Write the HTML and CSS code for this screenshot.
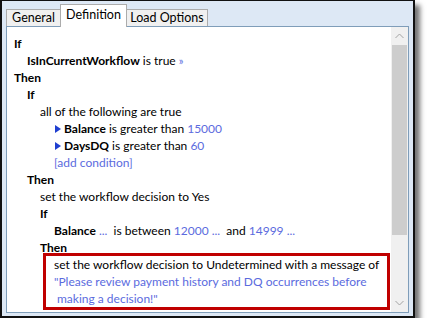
FILE: index.html
```html
<!DOCTYPE html>
<html lang="en">
<head>
  <meta charset="UTF-8" />
  <title>Rule Definition</title>
  <link rel="stylesheet" href="styles.css">
</head>
<body>
  <div class="window">
    <div class="tabs">
      <div class="tab tab-general">General</div>
      <div class="tab tab-active">Definition</div>
      <div class="tab tab-load">Load Options</div>
    </div>

    <div class="panel">
      <div class="rules">
        <div class="line kw">If</div>
        <div class="line lv1"><b>IsInCurrentWorkflow</b> is true <span class="link more">&raquo;</span></div>
        <div class="line kw">Then</div>
        <div class="line lv1 kw">If</div>
        <div class="line lv2">all of the following are true</div>
        <div class="line cond"><span class="arrow"></span><b>Balance</b> is greater than <span class="link">15000</span></div>
        <div class="line cond"><span class="arrow"></span><b>DaysDQ</b> is greater than <span class="link">60</span></div>
        <div class="line lv3 link">[add condition]</div>
        <div class="line lv1 kw">Then</div>
        <div class="line lv2">set the workflow decision to Yes</div>
        <div class="line lv2 kw">If</div>
        <div class="line lv3"><b>Balance</b> <span class="link">...</span>&nbsp; is between <span class="link">12000 ...</span>&nbsp; and <span class="link">14999 ...</span></div>
        <div class="line lv2 kw">Then</div>
        <div class="highlight">
          <div class="line">set the workflow decision to Undetermined with a message of</div>
          <div class="line link">"Please review payment history and DQ occurrences before</div>
          <div class="line link wrap">making a decision!"</div>
        </div>
      </div>

      <div class="scrollbar">
        <div class="sb-btn">
          <svg width="9" height="6" viewBox="0 0 9 6"><path d="M0.5 5 L4.5 1 L8.5 5" fill="none" stroke="#a3a3a3" stroke-width="1"/></svg>
        </div>
        <div class="sb-thumb"></div>
        <div class="sb-track"></div>
        <div class="sb-btn">
          <svg width="9" height="6" viewBox="0 0 9 6"><path d="M0.5 1 L4.5 5 L8.5 1" fill="none" stroke="#a3a3a3" stroke-width="1"/></svg>
        </div>
      </div>
    </div>
  </div>
</body>
</html>
```

FILE: styles.css
```css
* {
  box-sizing: border-box;
  margin: 0;
  padding: 0;
}

body {
  background: #ffffff;
  font-family: Lato, "Noto Sans", sans-serif;
  font-size: 12px;
  color: #000;
}

.window {
  width: 415px;
  height: 318px;
  background: #dde8f5;
  border: 2px solid #111;
  border-top-width: 1px;
  padding: 0 4px 3px 4px;
  box-shadow: 5px 5px 5px rgba(0, 0, 0, 0.55);
  display: flex;
  flex-direction: column;
}

/* tab strip */
.tabs {
  height: 25px;
  display: flex;
  align-items: flex-end;
}

.tab {
  height: 17px;
  border: 1px solid #acacac;
  border-bottom: none;
  background: #f0f0f0;
  line-height: 16px;
  text-align: center;
  font-size: 12.5px;
}

.tab-general {
  width: 54px;
  border-right: none;
}

.tab-active {
  width: 67px;
  height: 23px;
  background: #fff;
  margin-bottom: -1px;
  position: relative;
  line-height: 20px;
}

.tab-load {
  width: 81px;
  border-left: none;
}

/* content panel */
.panel {
  flex: 1;
  background: #fff;
  border: 1px solid #7f9db9;
  display: flex;
  overflow: hidden;
}

.rules {
  flex: 1;
  padding: 8px 0 0 7px;
}

.line {
  height: 17px;
  line-height: 17px;
  white-space: nowrap;
}

.kw {
  font-weight: bold;
}

.lv1 { padding-left: 13px; }
.lv2 { padding-left: 26px; }
.lv3 { padding-left: 40px; }

.cond {
  padding-left: 41px;
  display: flex;
  align-items: center;
  white-space: pre;
}

.arrow {
  width: 0;
  height: 0;
  border-top: 4px solid transparent;
  border-bottom: 4px solid transparent;
  border-left: 6px solid #1f3fd0;
  margin-right: 3px;
}

.link {
  color: #5b6bde;
}

.more {
  font-size: 11px;
}

.highlight {
  margin: -3px 0 0 29px;
  width: 347px;
  border: 3px solid #c00000;
  padding: 0 0 0 8px;
}

.highlight .wrap {
  padding-left: 3px;
}

/* scrollbar */
.scrollbar {
  width: 17px;
  background: #f0f0f0;
  display: flex;
  flex-direction: column;
}

.sb-btn {
  height: 18px;
  display: flex;
  align-items: center;
  justify-content: center;
}

.sb-thumb {
  height: 190px;
  background: #cdcdcd;
  margin: 0 1px;
}

.sb-track {
  flex: 1;
}
```
